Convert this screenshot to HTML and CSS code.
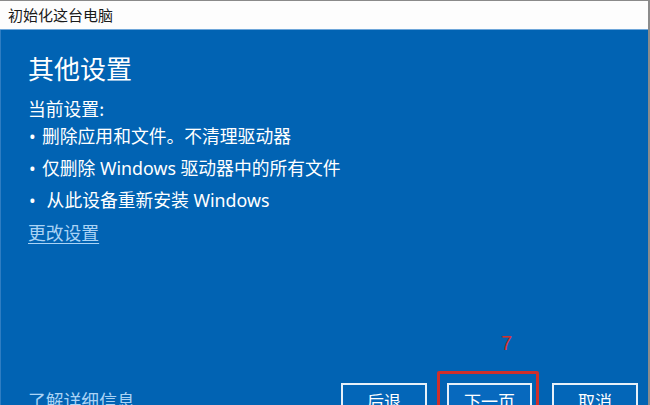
FILE: index.html
```html
<!DOCTYPE html>
<html lang="zh-CN">
<head>
<meta charset="utf-8">
<title>初始化这台电脑</title>
<link rel="stylesheet" href="styles.css">
</head>
<body>
<div class="window">
  <div class="titlebar">初始化这台电脑</div>
  <div class="content">
    <h1 class="heading">其他设置</h1>
    <p class="label">当前设置:</p>
    <ul class="settings">
      <li><span class="dot">•</span>删除应用和文件。不清理驱动器</li>
      <li><span class="dot">•</span>仅删除 Windows 驱动器中的所有文件</li>
      <li><span class="dot">•</span>&nbsp;从此设备重新安装 Windows</li>
    </ul>
    <a class="link change" href="#">更改设置</a>
    <div class="footer">
      <a class="link more" href="#">了解详细信息</a>
      <div class="buttons">
        <button class="btn">后退</button>
        <button class="btn btn-next">下一页<span class="mark"></span><span class="step">7</span></button>
        <button class="btn">取消</button>
      </div>
    </div>
  </div>
</div>
</body>
</html>
```

FILE: styles.css
```css
html, body {
  margin: 0;
  padding: 0;
  width: 650px;
  height: 405px;
  overflow: hidden;
  background: #0163b3;
}

body {
  font-family: "Noto Sans", "Noto Sans CJK SC", sans-serif;
}

.window {
  width: 650px;
  height: 430px;
  display: flex;
  flex-direction: column;
  box-sizing: border-box;
  border-top: 1px solid #8a8a8a;
  border-right: 2px solid #8c8c8c;
}

.titlebar {
  height: 28px;
  flex: none;
  background: #fdfdfd;
  color: #1a1a1a;
  font-family: "Noto Sans CJK SC", sans-serif;
  font-size: 15px;
  line-height: 28px;
  padding-left: 8px;
  border-bottom: 1px solid #6fa7da;
}

.content {
  flex: 1;
  display: flex;
  flex-direction: column;
  padding: 20px 10px 13px 27px;
  color: #ffffff;
  border-left: 1px solid #2f7dc2;
}

.heading {
  margin: 0;
  font-family: "Noto Sans CJK SC", sans-serif;
  font-weight: 400;
  font-size: 26px;
  line-height: 36px;
}

.label {
  margin: 10px 0 0;
  font-family: "Noto Sans CJK SC", sans-serif;
  font-size: 17.8px;
  line-height: 24px;
}

.settings {
  list-style: none;
  margin: 0;
  padding: 0;
  font-size: 17.8px;
  line-height: 32px;
}

.dot {
  display: inline-block;
  width: 14px;
  padding-left: 1px;
  box-sizing: border-box;
}

.link {
  color: #aad3f5;
  font-family: "Noto Sans CJK SC", sans-serif;
  font-size: 17.8px;
}

.change {
  align-self: flex-start;
  line-height: 32px;
  text-decoration: underline;
  text-underline-offset: 3px;
}

.more {
  text-decoration: none;
}

.footer {
  margin-top: auto;
  display: flex;
  align-items: center;
  justify-content: space-between;
}

.buttons {
  display: flex;
  gap: 20px;
}

.btn {
  position: relative;
  width: 86px;
  height: 34px;
  box-sizing: border-box;
  border: 2px solid #e6f0f9;
  background: #0366b8;
  color: #ffffff;
  font-family: "Noto Sans CJK SC", sans-serif;
  font-size: 17px;
  padding: 0;
}

.btn-next {
  width: 85px;
  background: #0769be;
}

/* red highlight frame drawn around the next button */
.mark {
  position: absolute;
  left: -12px;
  right: -9px;
  top: -14px;
  bottom: -20px;
  border: 3px solid #cf2f2a;
  border-radius: 2px;
}

.step {
  position: absolute;
  left: 52px;
  top: -54px;
  color: #d3312c;
  font-family: "Liberation Sans", sans-serif;
  font-size: 20px;
  line-height: 24px;
}
```
